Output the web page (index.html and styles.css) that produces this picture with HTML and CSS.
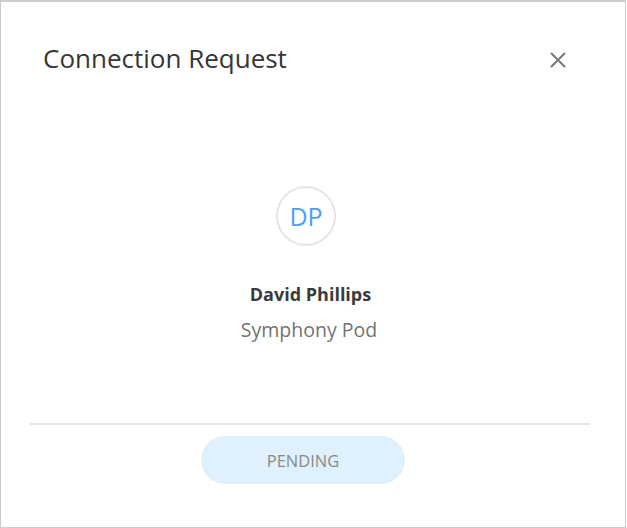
FILE: index.html
```html
<!DOCTYPE html>
<html>
<head>
<meta charset="utf-8">
<link rel="stylesheet" href="styles.css">
</head>
<body>
<div class="frame">
  <div class="header">
    <h1 class="title">Connection Request</h1>
    <button class="close" aria-label="Close">
      <svg width="16" height="16" viewBox="0 0 16 16"><path d="M1.5 1.5 L14.5 14.5 M14.5 1.5 L1.5 14.5" stroke="#7a7a7a" stroke-width="2" stroke-linecap="round"/></svg>
    </button>
  </div>
  <div class="profile">
    <div class="avatar">DP</div>
    <div class="name">David Phillips</div>
    <div class="pod">Symphony Pod</div>
  </div>
  <div class="footer">
    <button class="pending">PENDING</button>
  </div>
</div>
</body>
</html>
```
FILE: styles.css
```css
html, body {
  margin: 0;
  padding: 0;
  background: #fff;
}
body {
  font-family: "Open Sans", "Noto Sans", sans-serif;
}
.frame {
  width: 626px;
  height: 528px;
  box-sizing: border-box;
  border: 1px solid #cdcdcd;
  border-top-width: 2px;
  display: flex;
  flex-direction: column;
}
.header {
  display: flex;
  align-items: center;
  justify-content: space-between;
  padding: 39px 59px 0 42px;
  height: 34px;
}
.title {
  margin: 0;
  font-size: 26px;
  font-weight: 500;
  color: #363636;
  line-height: 34px;
}
.close {
  border: 0;
  background: none;
  padding: 0;
  width: 16px;
  height: 16px;
  display: flex;
  margin-top: 4px;
}
.profile {
  display: flex;
  flex-direction: column;
  align-items: center;
  padding-top: 111px;
  margin-left: -8px;
}
.avatar {
  width: 56px;
  height: 56px;
  margin-right: 6px;
  border: 2px solid #e6e6e6;
  border-radius: 50%;
  display: flex;
  align-items: center;
  justify-content: center;
  color: #4ba0f5;
  font-size: 25px;
  line-height: 1;
}
.name {
  margin-top: 36px;
  font-size: 18px;
  font-weight: 700;
  color: #3a3a3a;
  line-height: 24px;
  margin-left: 3px;
}
.pod {
  margin-top: 11px;
  font-size: 19.5px;
  color: #737373;
  line-height: 26px;
}
.footer {
  margin: auto 35px 0 29px;
  border-top: 2px solid #e8e8e8;
  padding: 11px 0 43px;
  display: flex;
  justify-content: center;
}
.pending {
  width: 204px;
  height: 48px;
  margin-left: -14px;
  border: 0;
  border-radius: 24px;
  background: #dff0fe;
  color: #8a8a8a;
  font-family: "Open Sans", "Noto Sans", sans-serif;
  font-size: 16.5px;
}
```
